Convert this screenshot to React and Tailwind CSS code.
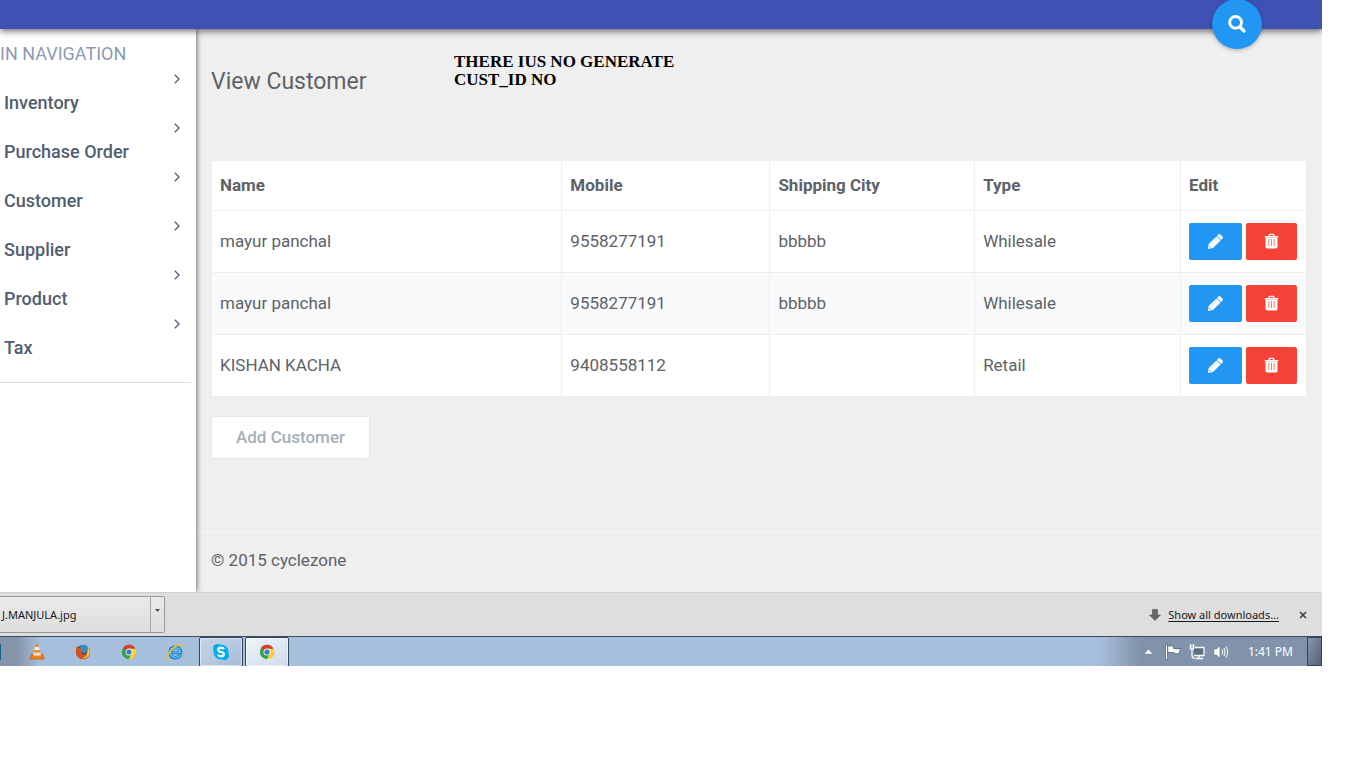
import React from "react";

const navItems = ["Inventory", "Purchase Order", "Customer", "Supplier", "Product", "Tax"];

const customers = [
  { name: "mayur panchal", mobile: "9558277191", city: "bbbbb", type: "Whilesale" },
  { name: "mayur panchal", mobile: "9558277191", city: "bbbbb", type: "Whilesale" },
  { name: "KISHAN KACHA", mobile: "9408558112", city: "", type: "Retail" },
];

function Chevron() {
  return (
    <svg width="6" height="10" viewBox="0 0 6 10" fill="none" stroke="#4f5d70" strokeWidth="1.3" aria-hidden="true">
      <path d="M0.8 0.8 5 5 0.8 9.2" />
    </svg>
  );
}

function SearchIcon() {
  return (
    <svg width="18" height="18" viewBox="0 0 18 18" fill="none" stroke="#fff" aria-hidden="true">
      <circle cx="7.6" cy="7.4" r="5.9" strokeWidth="2.9" />
      <path d="M12 12 16 16" strokeWidth="3.2" strokeLinecap="round" />
    </svg>
  );
}

function PencilIcon() {
  return (
    <svg width="17" height="17" viewBox="0 0 17 17" fill="#fff" aria-hidden="true">
      <path d="M11.3 1.6a1.5 1.5 0 0 1 2.1 0l2 2a1.5 1.5 0 0 1 0 2.100l-1.300 1.300-4.100-4.100z" />
      <path d="M9.500 3.400 13.600 7.500 6 15 .800 16 1.700 10.900z" />
      <path d="M4 11.600 10 5.700" stroke="#2196f3" strokeOpacity=".5" strokeWidth=".5" />
      <path d="M2.300 12.900 3.900 14.500" stroke="#2196f3" strokeWidth="1" />
    </svg>
  );
}

function TrashIcon() {
  return (
    <svg width="15" height="17" viewBox="0 0 15 17" fill="#fff" aria-hidden="true">
      <path d="M4.500 2.900V2Q4.500 .700 5.800 .700H9.200Q10.500 .700 10.500 2V2.900H14.200V4.600H.800V2.900zM6 2.900H9V2H6z" fillRule="evenodd" />
      <path d="M1.500 4.500H13.500V13.800Q13.500 15.600 11.700 15.600H3.300Q1.500 15.600 1.500 13.800z" />
      <path d="M4.800 6V13M7.500 6V13M10.200 6V13" stroke="#f44336" strokeOpacity=".7" strokeWidth="1" />
    </svg>
  );
}

function Vlc() {
  return (
    <svg width="16" height="17" viewBox="0 0 16 17" aria-hidden="true">
      <path d="M2.500 11H13.500L15 16H1z" fill="#ef7d12" stroke="#b9540a" strokeWidth=".6" />
      <path d="M7 1H9L12.500 13Q8 15 3.500 13z" fill="#f28a1e" />
      <path d="M6.100 4H9.900L10.700 7H5.300z" fill="#f3f3f3" />
      <path d="M4.600 9.500H11.400L12 12Q8 13.500 4 12z" fill="#e3e3e3" />
    </svg>
  );
}

function Firefox() {
  return (
    <svg width="16" height="16" viewBox="0 0 16 16" aria-hidden="true">
      <circle cx="8" cy="8" r="7" fill="#204a8c" />
      <circle cx="8.500" cy="5" r="4" fill="#3c8cc8" />
      <path d="M1.500 2 3.500 3.800 6.500 4 5 6 7.500 7.300 6 9Q8 11 10.500 10Q13 9 12.500 5 15 8 14.500 10.500 13 15.300 8 15.300 1.500 15 1 8.500 .800 5 1.500 2z" fill="#d9521a" />
      <path d="M12.500 2.500Q16.800 7.500 13.500 12 11 15 7 14.300 11.500 13 12 9.500 13 6 12.500 2.500z" fill="#fbc530" />
    </svg>
  );
}

function Chrome() {
  return (
    <svg width="16" height="16" viewBox="0 0 16 16" aria-hidden="true">
      <circle cx="8" cy="8" r="7.200" fill="#31a34a" />
      <path d="M8 8 1.800 4.400A7.200 7.200 0 0 1 14.400 4.700H8z" fill="#dd3d2e" />
      <path d="M8 4.700H14.400A7.200 7.200 0 0 1 7.600 15.200L10.900 9.600z" fill="#fcd030" />
      <circle cx="8" cy="8" r="3.500" fill="#f4f6f8" />
      <circle cx="8" cy="8" r="2.600" fill="#3978cb" />
    </svg>
  );
}

function Explorer() {
  return (
    <svg width="18" height="18" viewBox="0 0 18 18" fill="none" aria-hidden="true">
      <path d="M14.500 11.500Q13 14.800 9.500 14.800 4 14.500 4 9.500 4.200 4.500 9.300 4.300 14.800 4.500 14.600 9.500H6" stroke="#1f7cc4" strokeWidth="3.400" />
      <path d="M14.300 11.800Q13 14.500 9.500 14.500 4.400 14 4.400 9.500 4.700 4.900 9.300 4.700 14.300 5 14.300 9.300H6.500" stroke="#5cb9ee" strokeWidth="1.700" />
      <path d="M3.500 16.500Q.300 17 1.300 13.500 3.500 7 10 3 16-.200 16.600 3.500" stroke="#f3c01c" strokeWidth="1.500" />
    </svg>
  );
}

function Skype() {
  return (
    <svg width="18" height="18" viewBox="0 0 18 18" aria-hidden="true">
      <circle cx="9" cy="9" r="7.500" fill="#00aff0" />
      <circle cx="5.500" cy="5.500" r="4.500" fill="#00aff0" />
      <circle cx="12.500" cy="12.500" r="4.500" fill="#00aff0" />
      <path d="M12 6Q11 4.600 9 4.600 6.200 4.700 6.200 6.700 6.200 8.400 9 9 12 9.600 11.900 11.300 11.500 13.300 9 13.300 6.800 13.300 5.900 11.700" fill="none" stroke="#fff" strokeWidth="2.200" />
    </svg>
  );
}

function Flag() {
  return (
    <svg width="16" height="16" viewBox="0 0 16 16" fill="#fff" stroke="#3c4a5c" strokeWidth=".6" aria-hidden="true">
      <path d="M.500 .800H2.500V15.500H.500z" />
      <path d="M2.800 2H8.500V4.500Q11 5.500 15.500 4.500L14 9.500Q11 10.500 8.500 8.500H2.800z" />
    </svg>
  );
}

function Network() {
  return (
    <svg width="16" height="16" viewBox="0 0 16 16" fill="none" aria-hidden="true">
      <path d="M5 3.500H15V11.500H5z" fill="#5b6d82" />
      <path d="M6 3.500H15V11.500H5M10 11.500V14M6.500 14.500H14" stroke="#fff" strokeWidth="1.300" />
      <path d="M.700 1.500H5.300V5.500H.700z" fill="#fff" />
      <path d="M1.500 0V2M4.500 0V2M3 5V11.500Q3 14.300 6 14.500" stroke="#fff" strokeWidth="1.200" />
      <path d="M3 2V4.500" stroke="#5b6d82" strokeWidth=".8" />
    </svg>
  );
}

function Speaker() {
  return (
    <svg width="16" height="16" viewBox="0 0 16 16" fill="none" aria-hidden="true">
      <path d="M.800 5H3.500L7 1.500V14.500L3.500 11H.800z" fill="#fff" stroke="#4b586a" strokeWidth=".500" />
      <path d="M9 5.500Q10.500 8 9 10.500M11 4Q13.200 8 11 12M13 2.500Q16.200 8 13 13.500" stroke="#fff" strokeWidth="1" />
    </svg>
  );
}

const cell = "border border-[#eeeeee] px-2";
const textCell = `${cell} pb-0.5`;
const taskButton = "flex h-[30px] w-11 items-center justify-center rounded-xs border border-[#35455d] bg-linear-to-br shadow-[inset_0_0_0_1px_rgba(255,255,255,0.5)]";

export default function App() {
  return (
    <div className="min-h-screen bg-white pr-11 font-['Roboto',sans-serif] text-[17px] leading-6 text-[#5e6267]">
      <div className="overflow-hidden bg-[#efefef]">
        <header className="relative z-10 flex h-[29px] justify-end bg-[#3f51b5] pr-[60px] shadow-[0_2px_7px_rgba(0,0,0,0.6)]">
          <button aria-label="Search" className="-mt-px flex size-[50px] shrink-0 items-center justify-center rounded-full bg-[#2196f3] shadow-[0_1px_4px_rgba(0,0,0,0.3)]">
            <SearchIcon />
          </button>
        </header>

        <div className="flex">
          <aside className="relative w-[196px] shrink-0 bg-white pt-[13px] shadow-[0_0_6px_rgba(0,0,0,0.7)]">
            <h2 className="text-lg leading-6 text-[#8c9bb2]">IN NAVIGATION</h2>
            <nav className="mr-[5px] border-b border-[#dddfe8] pb-[22px]">
              <ul>
                {navItems.map((item) => (
                  <li key={item}>
                    <a href="#" className="block h-[49px] pl-1 text-lg leading-6 font-medium text-[#525e70]">
                      <span className="flex h-[25px] items-center justify-end pt-px pr-[11px]">
                        <Chevron />
                      </span>
                      <span className="block">{item}</span>
                    </a>
                  </li>
                ))}
              </ul>
            </nav>
          </aside>

          <div className="min-w-0 flex-1">
            <main className="px-[15px] pt-6 pb-[73px]">
              <div className="flex h-[107px]">
                <h1 className="w-[243px] shrink-0 pt-[13px] text-[23px] leading-8">View Customer</h1>
                <p className="w-60 font-['Liberation_Serif',serif] text-[17px] leading-[18px] font-bold text-black">
                  THERE IUS NO GENERATE CUST_ID NO
                </p>
              </div>
              <table className="w-full table-fixed border-collapse bg-white text-left">
                <colgroup>
                  <col className="w-[32%]" />
                  <col className="w-[19%]" />
                  <col className="w-[18.7%]" />
                  <col className="w-[18.8%]" />
                  <col className="w-[126px]" />
                </colgroup>
                <thead>
                  <tr className="h-[50px]">
                    {["Name", "Mobile", "Shipping City", "Type", "Edit"].map((label) => (
                      <th key={label} scope="col" className={`${textCell} font-bold`}>{label}</th>
                    ))}
                  </tr>
                </thead>
                <tbody>
                  {customers.map((c, i) => (
                    <tr key={i} className="h-[62px] even:bg-[#f9fafc]">
                      <td className={textCell}>{c.name}</td>
                      <td className={textCell}>{c.mobile}</td>
                      <td className={textCell}>{c.city}</td>
                      <td className={textCell}>{c.type}</td>
                      <td className={cell}>
                        <div className="flex gap-1">
                          <button aria-label="Edit customer" className="flex h-[37px] w-[53px] items-center justify-center rounded-xs bg-[#2196f3]">
                            <PencilIcon />
                          </button>
                          <button aria-label="Delete customer" className="flex h-[37px] w-[51px] items-center justify-center rounded-xs bg-[#f44336]">
                            <TrashIcon />
                          </button>
                        </div>
                      </td>
                    </tr>
                  ))}
                </tbody>
              </table>
              <button className="mt-[19px] rounded-[3px] border border-[#e4e7ee] bg-white px-6 pt-2 pb-[9px] font-medium text-[#a4afb7]">
                Add Customer
              </button>
            </main>
            <footer className="border-t border-[#f7f7f7] px-[15px] pt-[15px] pb-5">© 2015 cyclezone</footer>
          </div>
        </div>

        <div className="relative z-10 flex h-11 items-center justify-between border-t border-[#cfcfcf] bg-[#dedede] font-['Noto_Sans',sans-serif] text-[11px] text-[#16181c]">
          <div className="flex h-[37px] w-[165px] rounded-r-xs border border-l-0 border-[#999] bg-linear-to-b from-[#eaeaea] to-[#dedede]">
            <button className="flex-1 pl-0.5 text-left">J.MANJULA.jpg</button>
            <button aria-label="Download options" className="flex w-[14px] justify-center border-l border-[#aaa] pt-3">
              <svg width="5" height="3" viewBox="0 0 5 3" fill="#555" aria-hidden="true"><path d="M0 0H5L2.500 3z" /></svg>
            </button>
          </div>
          <div className="flex items-center pr-[15px]">
            <svg width="12" height="12" viewBox="0 0 12 12" fill="#666" stroke="#444" strokeWidth=".500" aria-hidden="true">
              <path d="M3.500 .500H8.500V6H11.500L6 11.500 .500 6H3.500z" />
            </svg>
            <a href="#" className="ml-[7px] underline underline-offset-2">Show all downloads...</a>
            <button aria-label="Close downloads bar" className="ml-5">
              <svg width="8" height="8" viewBox="0 0 8 8" stroke="#444" strokeWidth="1.700" aria-hidden="true"><path d="M1 1 7 7M7 1 1 7" /></svg>
            </button>
          </div>
        </div>

        <div className="flex h-[30px] items-center justify-between border-t border-[#3d4a61] bg-[#a6bfdc] font-['Noto_Sans',sans-serif] text-xs text-white">
          <div className="flex h-full items-center bg-linear-to-r from-[#8494a9] from-[16px] to-[#a6bfdc] to-[40px]">
            <span className="h-4 w-px rounded-r-full bg-[#185a8b]" />
            <button aria-label="VLC media player" className="ml-7"><Vlc /></button>
            <button aria-label="Firefox" className="ml-[30px]"><Firefox /></button>
            <button aria-label="Chrome" className="ml-[30px]"><Chrome /></button>
            <button aria-label="Internet Explorer" className="ml-[29px]"><Explorer /></button>
            <button aria-label="Skype" className={`${taskButton} ml-[15px] from-[#c5d5ea] to-[#a9bcd6]`}><Skype /></button>
            <button aria-label="Chrome window" className={`${taskButton} ml-0.5 from-[#f0f4fa] to-[#cfdaea]`}><Chrome /></button>
          </div>
          <div className="flex h-full items-center bg-linear-to-r from-[#a6bfdc] to-[#8193aa] to-[40px] pl-[44px]">
            <button aria-label="Show hidden icons">
              <svg width="9" height="5" viewBox="0 0 9 5" fill="#fff" stroke="#46566a" strokeWidth=".400" aria-hidden="true"><path d="M0 5 4.500 0 9 5z" /></svg>
            </button>
            <button aria-label="Action center" className="ml-3"><Flag /></button>
            <button aria-label="Network" className="ml-2"><Network /></button>
            <button aria-label="Volume" className="ml-2"><Speaker /></button>
            <time className="ml-[19px]">1:41 PM</time>
            <button aria-label="Show desktop" className="ml-[14px] h-full w-[15px] border border-[#344051] bg-linear-to-br from-[#8796a8] to-[#536276]" />
          </div>
        </div>
      </div>
    </div>
  );
}
